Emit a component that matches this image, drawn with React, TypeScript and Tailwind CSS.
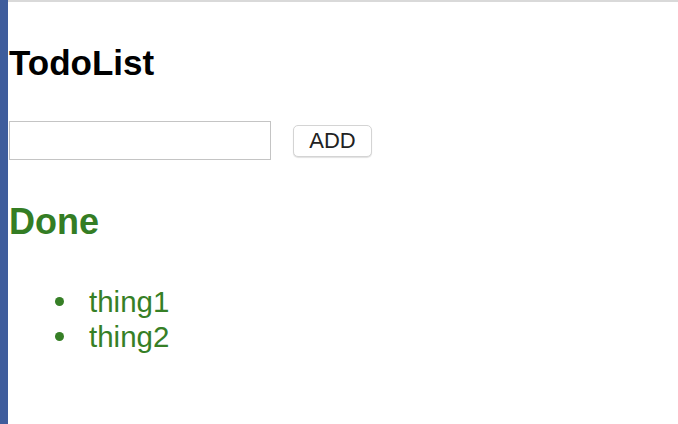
import { useState } from 'react';

export default function App() {
  const [text, setText] = useState('');
  const done = ['thing1', 'thing2'];

  return (
    <div className="flex h-[424px] w-[678px] overflow-hidden bg-white font-['Liberation_Sans',Arial,sans-serif]">
      {/* desktop edge */}
      <div className="h-full w-2 shrink-0 bg-[#3f5d9c]" />

      <div className="flex-1 border-t-2 border-[#d9d9d9] pl-px">
        <h1 className="mt-[43px] text-[35px] font-bold leading-[35px] text-black">TodoList</h1>

        <div className="mt-[41px] flex items-center gap-[22px]">
          <input
            value={text}
            onChange={(e) => setText(e.target.value)}
            className="h-[39px] w-[262px] border border-[#c4c4c4] bg-white px-1 text-[20px] outline-none"
          />
          <button className="h-[32px] w-[79px] rounded-[5px] border border-[#d4d4d4] bg-white text-[22px] leading-none text-[#222] shadow-[0_1px_1px_rgba(0,0,0,0.12)]">
            ADD
          </button>
        </div>

        <h2 className="mt-[44px] text-[36px] font-bold leading-[36px] text-[#347d24]">Done</h2>

        <ul className="mt-[44px] text-[29.5px] leading-[35px] text-[#367f26]">
          {done.map((item) => (
            <li key={item} className="flex items-center">
              <span className="ml-[46px] mr-[25px] h-[9px] w-[9px] rounded-full bg-[#367f26]" />
              {item}
            </li>
          ))}
        </ul>
      </div>
    </div>
  );
}
